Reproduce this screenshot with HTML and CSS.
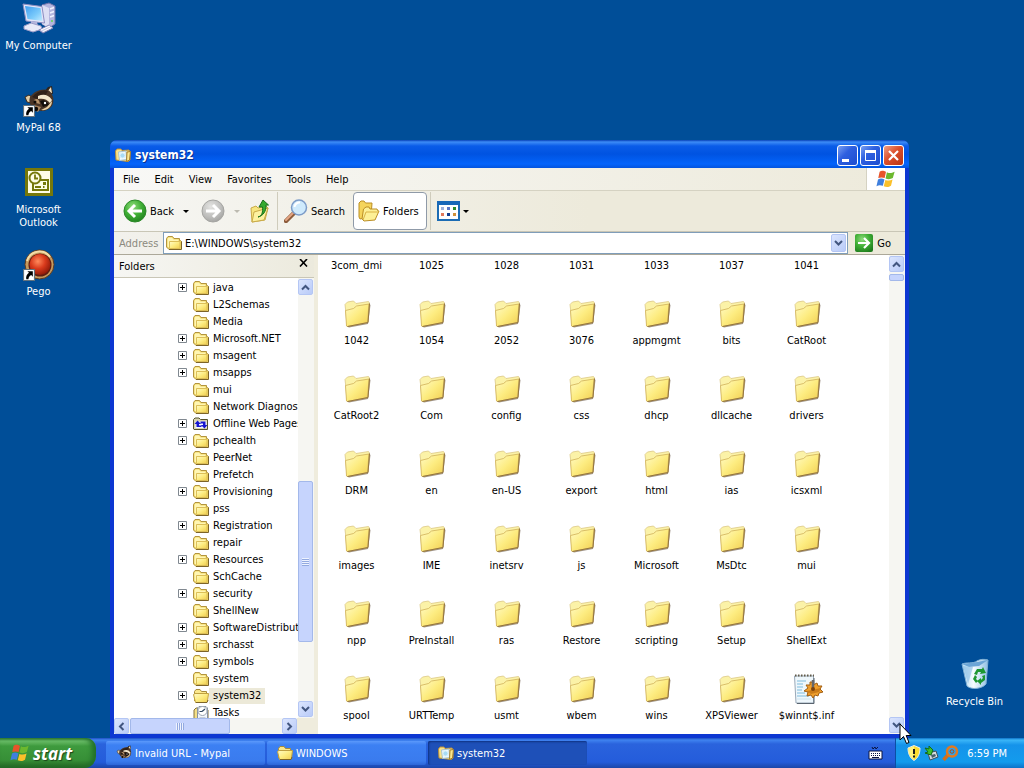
FILE: index.html
```html
<!DOCTYPE html>
<html lang="en">
<head>
  <meta charset="utf-8">
  <title>system32</title>
  <link rel="stylesheet" href="styles.css">
</head>
<body>
  <!-- shared icons -->
  <svg class="sprite" aria-hidden="true">
    <defs>
      <linearGradient id="gFolder" x1="0" y1="0" x2="1" y2="1">
        <stop offset="0" stop-color="#fffbc8"/><stop offset=".5" stop-color="#fdec80"/><stop offset="1" stop-color="#f0cd50"/>
      </linearGradient>
      <radialGradient id="gGreen" cx=".4" cy=".3" r=".8">
        <stop offset="0" stop-color="#8fdc7c"/><stop offset=".5" stop-color="#3fae35"/><stop offset="1" stop-color="#1c7a1c"/>
      </radialGradient>
      <radialGradient id="gGray" cx=".4" cy=".3" r=".8">
        <stop offset="0" stop-color="#e4e4e2"/><stop offset=".6" stop-color="#bdbdbb"/><stop offset="1" stop-color="#9c9c9a"/>
      </radialGradient>
      <radialGradient id="gRed" cx=".4" cy=".35" r=".7">
        <stop offset="0" stop-color="#ff8a5c"/><stop offset=".5" stop-color="#d93a1c"/><stop offset="1" stop-color="#8a1808"/>
      </radialGradient>
      <linearGradient id="gScreen" x1="0" y1="0" x2="1" y2="1">
        <stop offset="0" stop-color="#3f9df0"/><stop offset=".6" stop-color="#7ccbfb"/><stop offset="1" stop-color="#c4ecff"/>
      </linearGradient>
      <linearGradient id="gBin" x1="0" y1="0" x2="1" y2="0">
        <stop offset="0" stop-color="#b5dcf5"/><stop offset=".45" stop-color="#f5fcff"/><stop offset="1" stop-color="#8fbfe4"/>
      </linearGradient>
    </defs>

    <symbol id="i-folder-big" viewBox="0 0 32 32">
      <path d="M6 28.500 8 29.500 27 26 29.500 7 28 5.500z" fill="#5c4a38" opacity=".6"/>
      <path d="M4.500 11 4 6.500 6.500 4 12.500 3 15 5.500 27.500 3.500 28.500 5 27 24.500 6 28z" fill="#fbf2a8" stroke="#dcc885" stroke-width=".8"/>
      <path d="M4.500 12.500 12.500 10.500 15.500 8 28 6 26.500 24.500 6.500 28.500 5.500 28z" fill="url(#gFolder)" stroke="#cfb057" stroke-width=".8"/>
      <path d="M28.500 5.500 27 24.500 6.500 28.500" fill="none" stroke="#93743f"/>
    </symbol>
    <symbol id="i-folder" viewBox="0 0 16 16">
      <path d="M.500 12V3.500L2 1.500H6.500L8 3.500H13.500V5.500H14.500L15.500 6.500V13.500L14.500 14.500H3z" fill="#f0d660" stroke="#b3943e"/>
      <path d="M1.500 4 2.500 2.500H6L7.500 4.500H12.500V6H3.500V13L1.500 11.500z" fill="#fff6b4"/>
      <path d="M3.500 6.500H14V13.500H3.500z" fill="url(#gFolder)" stroke="#dcbf58"/>
      <path d="M3 14.500H15.500V6.500" fill="none" stroke="#7d6428"/>
    </symbol>
    <symbol id="i-open" viewBox="0 0 16 16">
      <path d="M1.500 13V3.500L3 1.500H7L8.500 3.500H13.500V6" fill="#fbe88c" stroke="#a88b3a"/>
      <path d="M.500 6.500 2 5.500H15.500L14.500 13.500 13.500 14.500H2.500z" fill="url(#gFolder)" stroke="#c0a040"/>
      <path d="M3 14.500H14L15 12" fill="none" stroke="#7d6428"/>
    </symbol>
    <symbol id="i-title" viewBox="0 0 16 16">
      <path d="M1 13 .500 4 2 2H6L7 3.500 14 3 15 5V13L13 14.500z" fill="#f9e28a" stroke="#b98f3a"/>
      <path d="M3.500 5 11 4 11.500 12.500 4.500 13.500z" fill="#f0faff" stroke="#a9c4d2"/>
      <circle cx="7.500" cy="8.500" r="2.500" fill="#a8dbf5" stroke="#d6effb"/>
      <path d="M12 5 15.500 4.500 14.500 13 11.500 14.500z" fill="#fbe78e" stroke="#a37c2c"/>
    </symbol>
    <symbol id="i-offline" viewBox="0 0 16 16">
      <path d="M.500 13V3.500L2 2H6L7.500 3.500H14.500V13.500H1z" fill="#d8d4b0" stroke="#55522c"/>
      <path d="M2.500 5.500H13.500V12H2.500z" fill="#f6f8ff"/>
      <path d="M4.500 4.500 1.500 8H3.500V11H8.500V9.500H6V8H8zM11.500 12.500 8 9H10V7.500H7.500V5.500H12.500V9H14.500z" fill="#1616d0"/>
    </symbol>
    <symbol id="i-tasks" viewBox="0 0 16 16">
      <path d="M1 15V5L3 3H7L8 5H15V16H1z" fill="#f4df86" stroke="#84733c"/>
      <path d="M4.500 16V3L6 1.500H13L14.500 3V16z" fill="#f1f5fb" stroke="#8791a0"/>
      <circle cx="9.500" cy="6" r="4.500" fill="#fff" stroke="#9aa3b0"/>
      <path d="M9 6.500 12 4M9 6.500H6.500" stroke="#30475f" stroke-width="1.200"/>
      <path d="M6.500 13H12.500" stroke="#9aa3b0"/>
    </symbol>
    <symbol id="i-inf" viewBox="0 0 32 32">
      <path d="M3.500 3H22.500V30H5z" fill="#eef7fc" stroke="#9aa9b8"/>
      <path d="M23 5V30.500H6" fill="none" stroke="#59646f"/>
      <path d="M4 2.500H23" stroke="#635c4a" stroke-width="2" stroke-dasharray="1.500 1.500"/>
      <path d="M6 8H15M6 11H12M6 14H12M6 17H11M6 20H14M6 23H18" stroke="#7dbbdd"/>
      <path d="M6 26H20" stroke="#cfe4f0"/>
      <path d="M19 9 21 9 22 12 26 10 27 13 31 13 29 16 32 19 28 20 27 23 24 22 22 25 20 22 16 23 17 19 13 18 17 15 15 12 19 12z" fill="#ef9f2c" stroke="#a25f14"/>
      <path d="M16 18 30 15 28 19 20 21z" fill="#b3650f" opacity=".6"/>
      <path d="M22 7V15" stroke="#65676b" stroke-width="2.500"/>
      <circle cx="22" cy="16" r="2" fill="#7c430c"/>
    </symbol>
    <symbol id="i-computer" viewBox="0 0 34 34">
      <path d="M20 4 27 2 33 5V23L27 27 20 23z" fill="#b4b5de" stroke="#7374aa"/>
      <path d="M20 4 27 7V27L20 23z" fill="#dddff4"/>
      <path d="M28 8 32 6.500M28 12 32 10.500M28 16 32 14.500" stroke="#f0f2ff" stroke-width="1.500"/>
      <circle cx="30" cy="20" r="1" fill="#62d84c"/>
      <path d="M1 3 20 5.500 22.500 22 4 20z" fill="#e2e5f8" stroke="#8b8cc0"/>
      <path d="M3 5 18.500 7 20.500 20 5.500 18z" fill="url(#gScreen)"/>
      <path d="M9 20 15 21 16 25 9 25z" fill="#b6b7de"/>
      <path d="M2 25 9 22 19 25 20 28 11 31 2 28z" fill="#e9eaf8" stroke="#9a9bc8"/>
      <path d="M17 29 27 24 31 27 21 32z" fill="#cfd0ea" stroke="#8687b8"/>
      <path d="M19 29 28 25M21 30.500 29.500 26.500" stroke="#fff"/>
    </symbol>
    <symbol id="i-raccoon" viewBox="0 0 32 32">
      <path d="M21 7 25 2 29 1 30 9z" fill="#30241b"/>
      <path d="M24 7 28 2 29 8z" fill="#f2dfbd"/>
      <path d="M2 12 6 10 10 13 8 18 4 17z" fill="#e3cda6" stroke="#3b2b1e"/>
      <path d="M7 12C11 6 19 3 25 5 30 8 32 15 29 21 25 26 19 27 14 25 8 23 5 18 7 12z" fill="#4a3527"/>
      <path d="M9 12C14 7 20 4 25 6L22 11 14 14z" fill="#302118"/>
      <path d="M15 11C20 9 25 9 29 15L27 18C24 14 20 13 15 14z" fill="#f5e8cd"/>
      <path d="M11 15C14 13 16 14 17 19L13 18z" fill="#b7926a"/>
      <path d="M17 16C21 14 24 16 26 20L20 22z" fill="#120d0a"/>
      <path d="M29 16C29 22 24 26 18 25L24 22z" fill="#e7d0a5"/>
      <circle cx="22" cy="18" r="1.200" fill="#fff"/><circle cx="12" cy="17" r="1.500" fill="#0e0a08"/>
      <path d="M11 20 18 22 15 27 11 25z" fill="#a88461"/>
      <circle cx="13" cy="24" r="2.200" fill="#0e0a08"/>
    </symbol>
    <symbol id="i-shortcut" viewBox="0 0 11 11">
      <path d="M.500.500H10.500V10.500H.500z" fill="#fff" stroke="#62727e"/>
      <path d="M4 2H9V7L7.500 5.500C6 6.500 5 7.500 5 9.500H3C2.500 7 3.500 5 5.500 3.500z" fill="#000"/>
    </symbol>
    <symbol id="i-outlook" viewBox="0 0 28 28">
      <path d="M0 0H28V28H0z" fill="#76780a"/>
      <path d="M3 3H25V25H3z" fill="#fffde6"/>
      <path d="M12 12H23V22H8V15" fill="none" stroke="#76780a" stroke-width="2"/>
      <circle cx="10" cy="10" r="5.500" fill="#fffde6" stroke="#76780a" stroke-width="2"/>
      <path d="M10 6.500V10.500H13M10 19H16M18 19H19.500" fill="none" stroke="#76780a" stroke-width="1.800"/>
      <path d="M18 14H21V17H18z" fill="#76780a"/>
    </symbol>
    <symbol id="i-pego" viewBox="0 0 32 32">
      <circle cx="16.500" cy="15.500" r="14.500" fill="#c59a5e" stroke="#5a3a22"/>
      <path d="M4 12A13 13 0 0 1 27 8" fill="none" stroke="#f3dda8" stroke-width="2"/>
      <circle cx="17" cy="16" r="11.500" fill="#5e1c10"/>
      <circle cx="17" cy="15.500" r="10.500" fill="url(#gRed)"/>
    </symbol>
    <symbol id="i-bin" viewBox="0 0 32 34">
      <path d="M3 7C8 5 14 7 18 4 21 2 26 2 29 3L27 27C23 32 12 33 8 29z" fill="url(#gBin)" stroke="#7fb0d6"/>
      <path d="M3 7 10 10 20 9 29 3 18 5z" fill="#6ba5d6"/>
      <path d="M4 9 9 27 14 10z" fill="#89bce2" opacity=".6"/>
      <path d="M15 17 18 12 23 12 24 10 27 16 21 17 22 15 19 15 18 18zM26 18 26 23 22 26 22 28 18 24 22 21 22 23 24 21 23 19zM17 26 14 22 16 18 18 20 17 22 19 24z" fill="#1c9731"/>
    </symbol>
    <symbol id="i-flag" viewBox="0 0 22 22">
      <path d="M4 3C6 1 9 2 11 3L9.500 10C7 9 5 9 2.500 10z" fill="#e8542a"/>
      <path d="M12 3.500C15 5 17 4.500 20.500 3L18.500 10C16 11.500 13 11.500 10.500 10.500z" fill="#6cb82e"/>
      <path d="M2.200 11.500C5 10 7 10.500 9.300 11.500L7.500 18.500C5 17.500 3 17.500.500 19z" fill="#3f7fdd"/>
      <path d="M10.300 12C13 13 15.500 13 18.200 11.500L16.500 18.500C13.500 20.500 11 20 8.500 19z" fill="#fbc02a"/>
    </symbol>
    <symbol id="i-search" viewBox="0 0 24 24">
      <path d="M2 22 10 14" stroke="#8c5c3c" stroke-width="4.500" stroke-linecap="round"/>
      <path d="M2 21 9 14" stroke="#e5a583" stroke-width="2" stroke-linecap="round"/>
      <circle cx="15" cy="8.500" r="7.500" fill="#cfeafc" stroke="#7d9cc8" stroke-width="1.500"/>
      <path d="M10.500 8A5 5 0 0 1 16 3.500" fill="none" stroke="#fff" stroke-width="2"/>
    </symbol>
  </svg>

  <main class="desktop">
    <div class="shortcut my-computer">
      <svg width="34" height="34"><use href="#i-computer"/></svg>
      <span>My Computer</span>
    </div>
    <div class="shortcut mypal">
      <svg width="32" height="32"><use href="#i-raccoon"/><use href="#i-shortcut" y="20" width="12" height="12"/></svg>
      <span>MyPal 68</span>
    </div>
    <div class="shortcut outlook">
      <svg width="28" height="28"><use href="#i-outlook"/></svg>
      <span>Microsoft Outlook</span>
    </div>
    <div class="shortcut pego">
      <svg width="32" height="32"><use href="#i-pego"/><use href="#i-shortcut" y="20" width="12" height="12"/></svg>
      <span>Pego</span>
    </div>
    <div class="shortcut recycle">
      <svg width="32" height="34"><use href="#i-bin"/></svg>
      <span>Recycle Bin</span>
    </div>

    <section class="window">
      <header class="titlebar">
        <svg width="16" height="16"><use href="#i-title"/></svg>
        <h1>system32</h1>
        <button class="caption" aria-label="Minimize"><svg width="19" height="19"><path d="M4 13H11V16H4z" fill="#fff"/></svg></button>
        <button class="caption" aria-label="Maximize"><svg width="19" height="19"><path d="M4.500 5V14.500H14.500V5" fill="none" stroke="#fff"/><path d="M4 4H15V7H4z" fill="#fff"/></svg></button>
        <button class="caption close" aria-label="Close"><svg width="19" height="19"><path d="M5 5 14 14M14 5 5 14" stroke="#fff" stroke-width="2.200"/></svg></button>
      </header>

      <div class="window-body">
        <nav class="menubar">
          <button>File</button>
          <button>Edit</button>
          <button>View</button>
          <button>Favorites</button>
          <button>Tools</button>
          <button>Help</button>
          <div class="brand"><svg width="20" height="20"><use href="#i-flag"/></svg></div>
        </nav>

        <div class="toolbar">
          <button class="tool">
            <svg width="24" height="24" viewBox="0 0 24 24"><circle cx="12" cy="12" r="11" fill="url(#gGreen)" stroke="#2d8a2a"/><path d="M19 12H7M12 6 6 12 12 18" fill="none" stroke="#fff" stroke-width="3"/></svg>
            Back
          </button>
          <button class="drop" aria-label="Back history"></button>
          <button class="tool forward" aria-label="Forward">
            <svg width="24" height="24" viewBox="0 0 24 24"><circle cx="12" cy="12" r="11" fill="url(#gGray)" stroke="#a5a5a2"/><path d="M5 12H17M12 6 18 12 12 18" fill="none" stroke="#fff" stroke-width="3"/></svg>
          </button>
          <button class="drop off" aria-label="Forward history"></button>
          <button class="tool up" aria-label="Up">
            <svg width="20" height="24" viewBox="0 0 20 24">
              <path d="M1 9 6 7 8 9 16 7 18 9 15 21 2 23z" fill="#f7e57e" stroke="#c9aa48"/>
              <path d="M4 13 18 9 14 21 2 23z" fill="#fdf2a0" stroke="#c9aa48"/>
              <path d="M8 18C12 17 13 13 12.500 8H9L13 1 18.500 6H16C16.500 12 13 17 8 18z" fill="#35aa2f" stroke="#1a6f1c"/>
            </svg>
          </button>
          <span class="rule"></span>
          <button class="tool search">
            <svg width="24" height="24"><use href="#i-search"/></svg>
            Search
          </button>
          <button class="tool folders">
            <svg width="22" height="22" viewBox="0 0 22 22">
              <path d="M1 17V3L3 1H6L7.500 3H14L13 17 2 19z" fill="#f5d45b" stroke="#bb8e24"/>
              <path d="M4 19 5.500 9 8 7H11L12 9H19L20 11 21 11 17 20 6 21z" fill="#fdf096" stroke="#bb8e24"/>
              <path d="M5 20 8 12H21" fill="none" stroke="#d9b245"/>
            </svg>
            Folders
          </button>
          <span class="rule"></span>
          <button class="tool views" aria-label="Views">
            <svg width="23" height="20">
              <path d="M1 1H22V19H1z" fill="#fff" stroke="#1c6cb4" stroke-width="2"/>
              <path d="M0 0H23V4H0z" fill="#1768b8"/>
              <path d="M4 6H7V9H4z" fill="#9cb0dc"/><path d="M10 6H13V9H10z" fill="#5a78c8"/><path d="M16 6H19V9H16z" fill="#2c8c2c"/>
              <path d="M4 12H7V15H4z" fill="#e0785a"/><path d="M10 12H13V15H10z" fill="#123f92"/><path d="M16 12H19V15H16z" fill="#d09038"/>
            </svg>
          </button>
          <button class="drop views-drop" aria-label="View modes"></button>
        </div>

        <div class="addressbar">
          <label for="address">Address</label>
          <div class="combo">
            <svg width="16" height="16"><use href="#i-folder"/></svg>
            <input id="address" type="text" value="E:\WINDOWS\system32">
            <button class="sb" aria-label="Show addresses"><svg width="9" height="7"><path d="M1 1 4.500 4.500 8 1"/></svg></button>
          </div>
          <button class="go">
            <svg width="18" height="18"><rect width="18" height="18" rx="2" fill="url(#gGreen)"/><path d="M3 9H13M9 4 14 9 9 14" fill="none" stroke="#fff" stroke-width="2.200"/></svg>
            Go
          </button>
        </div>

        <div class="panes">
          <aside class="explorer-bar">
            <div class="bar-title">
              <h2>Folders</h2>
              <button aria-label="Close Folders"><svg width="9" height="8"><path d="M1 0 8 7.500M8 0 1 7.500" stroke="#000" stroke-width="1.600"/></svg></button>
            </div>
            <div class="tree-area">
              <ul class="tree" id="tree"></ul>
              <div class="vscroll">
                <button class="sb" aria-label="Scroll up"><svg width="9" height="7"><path d="M1 5.500 4.500 2 8 5.500"/></svg></button>
                <div class="space-before"></div>
                <div class="thumb"></div>
                <div class="space-after"></div>
                <button class="sb" aria-label="Scroll down"><svg width="9" height="7"><path d="M1 1 4.500 4.500 8 1"/></svg></button>
              </div>
            </div>
            <div class="hscroll">
              <button class="sb" aria-label="Scroll left"><svg width="7" height="9"><path d="M5.500 1 2 4.500 5.500 8"/></svg></button>
              <div class="thumb"></div>
              <button class="sb right" aria-label="Scroll right"><svg width="7" height="9"><path d="M1.500 1 5 4.500 1.500 8"/></svg></button>
              <div class="corner"></div>
            </div>
          </aside>
          <div class="splitter"></div>
          <div class="files"><ul class="file-grid" id="files"></ul></div>
          <div class="vscroll main-scroll">
            <button class="sb" aria-label="Scroll up"><svg width="9" height="7"><path d="M1 5.500 4.500 2 8 5.500"/></svg></button>
            <div class="thumb"></div>
            <div class="space-after"></div>
            <button class="sb" aria-label="Scroll down"><svg width="9" height="7"><path d="M1 1 4.500 4.500 8 1"/></svg></button>
          </div>
        </div>
      </div>
    </section>
  </main>

  <footer class="taskbar">
    <button class="start">
      <svg width="20" height="20"><use href="#i-flag"/></svg>
      start
    </button>
    <div class="tasks">
      <button class="task"><svg width="16" height="16"><use href="#i-raccoon"/></svg>Invalid URL - Mypal</button>
      <button class="task"><svg width="16" height="16"><use href="#i-open"/></svg>WINDOWS</button>
      <button class="task active"><svg width="16" height="16"><use href="#i-title"/></svg>system32</button>
    </div>
    <button class="language" aria-label="Keyboard">
      <svg width="15" height="14">
        <path d="M1 5H14V13H1z" fill="#fff" stroke="#0b1440"/>
        <path d="M3 7.500H13M3 9.500H13" stroke="#0b1440" stroke-dasharray="1 1"/>
        <path d="M4 11.500H11" stroke="#0b1440"/>
        <path d="M4 1 5 3 7 1 8 3 10 1" fill="none" stroke="#0b1440"/>
      </svg>
    </button>
    <div class="tray">
      <svg width="14" height="16"><path d="M7 .500 13 3C13 9 11 13 7 15.500 3 13 1 9 1 3z" fill="#fbdc2e" stroke="#e9edf0"/><path d="M7 1V15C3 12 1.500 9 1.500 3.500z" fill="#fff27c"/><path d="M7 4V9M7 10.500V12.500" stroke="#1d1d1d" stroke-width="2"/></svg>
      <svg width="15" height="16"><path d="M4 8 12 6 14 12 6 15z" fill="#d6dde0" stroke="#41505a"/><path d="M7 10 11 9 12 11 8 13z" fill="#48606c"/><path d="M1 3 5 4 5 1 9 5 7 10 1 8 4 7z" fill="#3cc02c" stroke="#146b18"/></svg>
      <svg width="17" height="16"><path d="M1.500 15 6 10" stroke="#d0701e" stroke-width="3.500"/><circle cx="10" cy="6.500" r="5" fill="#2fa0ea" stroke="#e07a20" stroke-width="2.500"/><circle cx="10" cy="6.500" r="1.800" fill="none" stroke="#a9501a"/></svg>
      <time>6:59 PM</time>
    </div>
  </footer>

  <svg class="cursor" width="14" height="22"><path d="M1 1V17L4.500 13.500 7.500 20.500 10 19.500 7.200 12.500H12z" fill="#fff" stroke="#000"/></svg>

  <script src="script.js"></script>
</body>
</html>
```

FILE: styles.css
```css
* {
  box-sizing: border-box;
}
body {
  margin: 0;
  height: 100vh;
  display: flex;
  flex-direction: column;
  overflow: hidden;
  background: #004e98;
  color: #000;
  font-family: Tahoma, "DejaVu Sans Condensed", "DejaVu Sans", sans-serif;
  font-size: 11px;
  line-height: 13px;
}
button, input {
  margin: 0;
  padding: 0;
  border: 0;
  background: none;
  color: inherit;
  font: inherit;
}
h1, h2, ul {
  margin: 0;
  padding: 0;
  font-size: 11px;
  font-weight: normal;
  list-style: none;
}
svg {
  display: block;
  flex: none;
}
.sprite {
  position: absolute;
  width: 0;
  height: 0;
}

/* Desktop */
.desktop {
  flex: 1;
  min-height: 0;
  position: relative;
}
.shortcut {
  position: absolute;
  left: 1px;
  width: 75px;
  display: flex;
  flex-direction: column;
  align-items: center;
  gap: 4px;
  color: #fff;
  text-align: center;
}
.my-computer {
  top: 1px;
}
.mypal {
  top: 85px;
}
.outlook {
  top: 168px;
  gap: 7px;
}
.pego {
  top: 249px;
}
.recycle {
  top: 657px;
  left: auto;
  right: 12px;
}

/* Window */
.window {
  position: absolute;
  top: 140px;
  right: 115px;
  bottom: 0;
  left: 110px;
  display: flex;
  flex-direction: column;
  padding: 0 4px 4px;
  border-radius: 7px 7px 0 0;
  background: #0d37d2;
}
.titlebar {
  flex: none;
  height: 28px;
  margin: 0 -4px;
  padding: 2px 5px 0;
  display: flex;
  align-items: center;
  gap: 2px;
  border-radius: 7px 7px 0 0;
  background: linear-gradient(#0842b8 0, #3d8cf7 2px, #0a5ce8 6px, #0053e1 14px, #0464fb 24px, #0354de 28px);
}
.titlebar h1 {
  flex: 1;
  padding-left: 2px;
  color: #fff;
  font-size: 12px;
  font-weight: bold;
  text-shadow: 1px 1px #0a2f8c;
}
.caption {
  width: 21px;
  height: 21px;
  border: 1px solid #fff;
  border-radius: 3px;
  background: linear-gradient(135deg, #7aa0f2, #2f60e0 40%, #1c4dcf);
}
.close {
  background: linear-gradient(135deg, #f0a085, #dc4f2c 45%, #b93413);
}
.window-body {
  flex: 1;
  min-height: 0;
  display: flex;
  flex-direction: column;
  background: #efecdd;
}
.menubar {
  flex: none;
  height: 23px;
  display: flex;
  padding-left: 1px;
  background: linear-gradient(90deg, #f8f8f6, #edeadb);
  border-bottom: 1px solid #d5d2c2;
}
.menubar button {
  padding: 0 7px 0 8px;
}
.brand {
  width: 39px;
  margin-left: auto;
  display: flex;
  align-items: center;
  justify-content: center;
  border-left: 1px solid #d5d2c2;
  background: #fff;
}
.toolbar {
  flex: none;
  height: 41px;
  display: flex;
  align-items: center;
  padding-left: 9px;
  background: linear-gradient(90deg, #f6f6f3, #edeadb 60%);
  border-bottom: 1px solid #c9c6b6;
}
.tool {
  display: flex;
  align-items: center;
  gap: 3px;
}
.drop {
  width: 23px;
  height: 24px;
}
.drop::after {
  content: "";
  display: block;
  width: 0;
  margin: 0 auto;
  border: 3px solid transparent;
  border-top-color: #000;
  border-bottom: 0;
}
.off::after {
  border-top-color: #bcbab0;
}
.forward {
  margin-left: 4px;
}
.up {
  margin-left: 2px;
}
.rule {
  width: 1px;
  height: 38px;
  margin: 0 6px 0 7px;
  background: #cfccbc;
}
.folders {
  height: 38px;
  margin-left: 8px;
  padding: 0 7px 0 4px;
  border: 1px solid #8f9aa8;
  border-radius: 4px;
  background: #fff;
}
.folders + .rule {
  margin-left: 3px;
}
.views-drop {
  width: 12px;
}
.addressbar {
  flex: none;
  height: 22px;
  display: flex;
  align-items: stretch;
  padding: 0 14px 0 5px;
  background: linear-gradient(90deg, #f2f1ec, #edeadb 40%);
}
.addressbar label {
  width: 44px;
  align-self: center;
  color: #8c8a7e;
}
.combo {
  flex: 1;
  display: flex;
  align-items: center;
  gap: 3px;
  padding: 0 1px 0 2px;
  border: 1px solid #7f9db9;
  background: #fff;
}
.combo input {
  flex: 1;
  min-width: 0;
  outline: none;
}
.go {
  display: flex;
  align-items: center;
  gap: 4px;
  margin-left: 7px;
}

/* Scroll bars */
.sb {
  flex: none;
  width: 15px;
  height: 16px;
  display: flex;
  align-items: center;
  justify-content: center;
  border: 1px solid #b4c6f4;
  border-radius: 2px;
  background: linear-gradient(135deg, #dbe5fe, #b9cbf8);
}
.sb path {
  fill: none;
  stroke: #42567f;
  stroke-width: 2;
}
.combo .sb {
  height: 18px;
}
.thumb {
  border: 1px solid #a3b8ea;
  border-radius: 2px;
  background: #c6d4fd;
  display: flex;
  align-items: center;
  justify-content: center;
}
.vscroll {
  flex: none;
  width: 16px;
  display: flex;
  flex-direction: column;
  padding: 1px 1px 1px 0;
  background: #f6f6f2;
}
.vscroll .thumb {
  flex: 160;
}
.vscroll .thumb::after {
  content: "";
  width: 7px;
  height: 8px;
  background: repeating-linear-gradient(#eef3ff 0 1px, #93aae0 1px 2px);
}
.space-before {
  flex: 187;
}
.space-after {
  flex: 59;
}
.hscroll {
  flex: none;
  height: 16px;
  display: flex;
  background: #f6f6f2;
}
.hscroll .thumb {
  width: 50%;
  margin-left: 1px;
}
.hscroll .thumb::after {
  content: "";
  width: 8px;
  height: 7px;
  background: repeating-linear-gradient(90deg, #eef3ff 0 1px, #93aae0 1px 2px);
}
.hscroll .right {
  margin-left: auto;
}
.corner {
  width: 17px;
  background: #efecdd;
}
.main-scroll .thumb {
  flex: none;
  height: 7px;
  margin-top: 2px;
}
.main-scroll .thumb::after {
  display: none;
}

/* Panes */
.panes {
  flex: 1;
  min-height: 0;
  display: flex;
  background: #fff;
  border-top: 1px solid #aca899;
}
.explorer-bar {
  flex: none;
  width: 200px;
  display: flex;
  flex-direction: column;
}
.bar-title {
  flex: none;
  height: 23px;
  display: flex;
  align-items: center;
  justify-content: space-between;
  padding: 0 6px 0 5px;
  background: linear-gradient(90deg, #f6f6f3, #eceadd);
  border-bottom: 1px solid #c9c6b6;
}
.bar-title button {
  padding-bottom: 6px;
}
.tree-area {
  flex: 1;
  min-height: 0;
  display: flex;
}
.tree {
  flex: 1;
  min-width: 0;
  overflow: hidden;
  padding: 1px 0 0 64px;
}
.tree li {
  height: 17px;
  display: flex;
  align-items: center;
  white-space: nowrap;
}
.expander {
  flex: none;
  width: 9px;
  height: 9px;
  margin-right: 6px;
}
.tree span {
  padding: 1px 4px 2px;
}
.tree .selected span {
  background: #ece9d8;
}
.splitter {
  flex: none;
  width: 4px;
  background: #efecdd;
}
.files {
  flex: 1;
  min-width: 0;
  overflow: hidden;
}
.file-grid {
  display: grid;
  grid-template-columns: repeat(auto-fill, 75px);
  grid-auto-rows: 75px;
  margin-top: -32px;
  padding-left: 1px;
}
.file-grid li {
  display: flex;
  flex-direction: column;
  align-items: center;
  gap: 4px;
}

/* Taskbar */
.taskbar {
  flex: none;
  height: 30px;
  display: flex;
  color: #fff;
  background: linear-gradient(#1f4fc4 0, #3f83f0 2px, #2a63dd 6px, #245cdb 24px, #1c46a8 30px);
}
.start {
  width: 96px;
  display: flex;
  align-items: center;
  gap: 3px;
  padding-left: 10px;
  border-radius: 0 10px 12px 0;
  background: linear-gradient(#357f35 0, #6dc06a 3px, #3e9a3e 8px, #378f37 22px, #226322 30px);
  box-shadow: inset -4px 0 5px #22702a;
  font-family: "Trebuchet MS", "Open Sans", sans-serif;
  font-size: 17px;
  font-style: italic;
  font-weight: bold;
  text-shadow: 1px 1px 1px #1a451a;
}
.tasks {
  flex: 1;
  min-width: 0;
  display: flex;
  align-items: center;
  gap: 2px;
  padding-left: 10px;
}
.task {
  width: 159px;
  height: 24px;
  display: flex;
  align-items: center;
  gap: 3px;
  padding-left: 10px;
  border-radius: 2px;
  background: linear-gradient(#5b99fb 0, #3c80f3 4px, #3a7bee 20px, #2d66d8 24px);
}
.active {
  background: #1e50b8;
  box-shadow: inset 1px 1px 2px #0f3182;
}
.language {
  padding: 0 12px;
}
.tray {
  width: 129px;
  display: flex;
  align-items: center;
  padding-left: 11px;
  gap: 3px;
  border-left: 1px solid #0b4fa5;
  background: linear-gradient(#0d72c8 0, #3bb6f8 2px, #1593ea 7px, #139bed 24px, #0d72c8 30px);
}
.tray time {
  margin-left: auto;
  padding-right: 17px;
}
.cursor {
  position: absolute;
  top: 723px;
  left: 899px;
}
```

FILE: script.js
```js
// + marks a folder that can be expanded
var tree = [
  '+java', 'L2Schemas', 'Media', '+Microsoft.NET', '+msagent', '+msapps', 'mui',
  'Network Diagnostic', '+Offline Web Pages', '+pchealth', 'PeerNet', 'Prefetch',
  '+Provisioning', 'pss', '+Registration', 'repair', '+Resources', 'SchCache',
  '+security', 'ShellNew', '+SoftwareDistribution', '+srchasst', '+symbols',
  'system', '+system32', 'Tasks'
];

var treeIcons = { 'Offline Web Pages': 'i-offline', 'system32': 'i-open', 'Tasks': 'i-tasks' };

var files = [
  '3com_dmi', '1025', '1028', '1031', '1033', '1037', '1041',
  '1042', '1054', '2052', '3076', 'appmgmt', 'bits', 'CatRoot',
  'CatRoot2', 'Com', 'config', 'css', 'dhcp', 'dllcache', 'drivers',
  'DRM', 'en', 'en-US', 'export', 'html', 'ias', 'icsxml',
  'images', 'IME', 'inetsrv', 'js', 'Microsoft', 'MsDtc', 'mui',
  'npp', 'PreInstall', 'ras', 'Restore', 'scripting', 'Setup', 'ShellExt',
  'spool', 'URTTemp', 'usmt', 'wbem', 'wins', 'XPSViewer', '$winnt$.inf'
];

var plus = '<path d="M.5.5H8.5V8.5H.5z" fill="#fff" stroke="#808890"/><path d="M2 4.5H7M4.5 2V7" stroke="#000"/>';

document.getElementById('tree').innerHTML = tree.map(function (item) {
  var expandable = item[0] === '+';
  var name = item.replace('+', '');
  return '<li' + (name === 'system32' ? ' class="selected"' : '') + '>' +
    '<svg class="expander">' + (expandable ? plus : '') + '</svg>' +
    '<svg width="16" height="16"><use href="#' + (treeIcons[name] || 'i-folder') + '"/></svg>' +
    '<span>' + name + '</span></li>';
}).join('');

document.getElementById('files').innerHTML = files.map(function (name) {
  var icon = name === '$winnt$.inf' ? 'i-inf' : 'i-folder-big';
  return '<li><svg width="32" height="32"><use href="#' + icon + '"/></svg><span>' + name + '</span></li>';
}).join('');
```
